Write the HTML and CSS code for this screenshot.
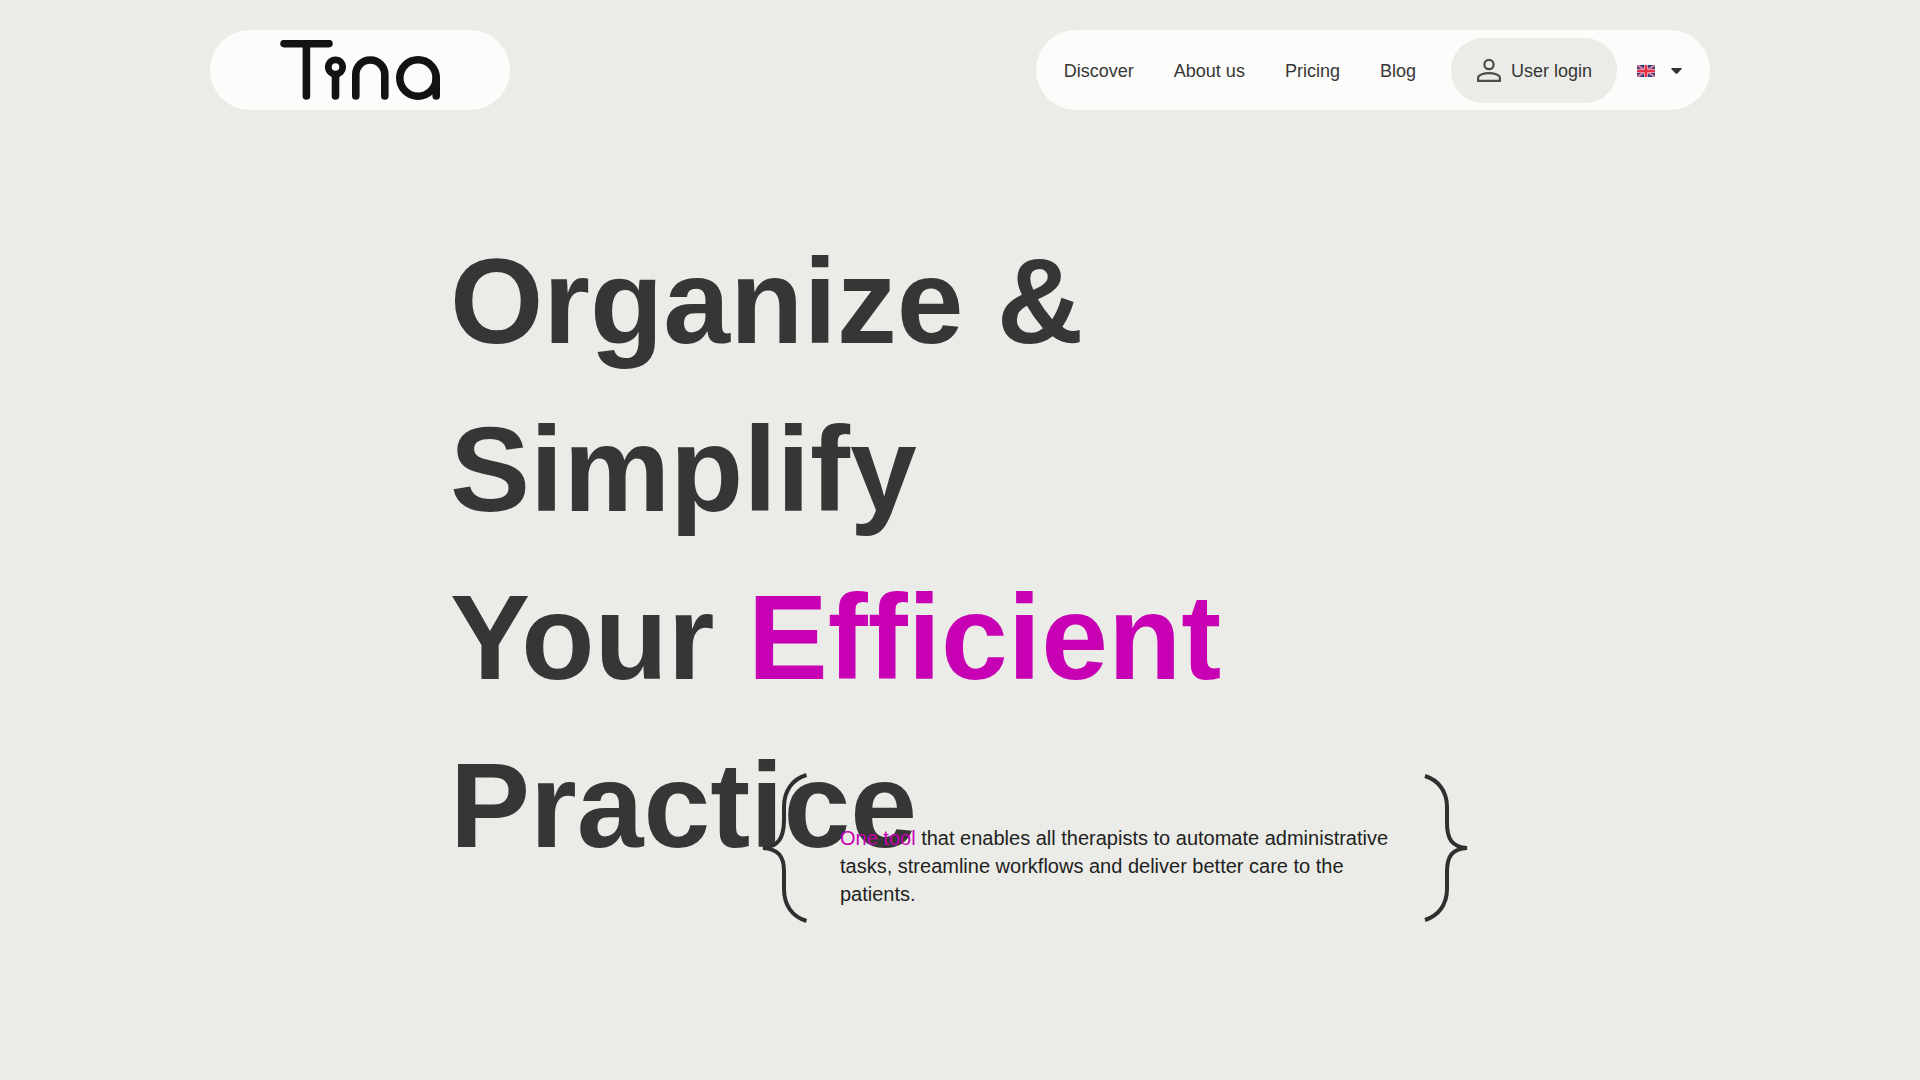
FILE: index.html
```
<!DOCTYPE html>
<html lang="en">
<head>
    <meta charset="UTF-8">
    <meta name="viewport" content="width=device-width, initial-scale=1.0">
    <title>Tina</title>
    <link rel="stylesheet" href="styles.css">
</head>
<body>
    <header class="header">
        <a class="logo" href="#" aria-label="Tina">
            <svg width="160" height="60" viewBox="10 10 160 60" fill="none" stroke="#131313" stroke-width="7.6" stroke-linecap="round">
                <path d="M14 13.6H59M36.4 14V66"/>
                <circle cx="65.5" cy="37" r="7.2" stroke-width="6.8"/>
                <path d="M65.5 45V66"/>
                <path d="M85.8 66V44.5a14.4 14.4 0 0 1 29 0V66"/>
                <circle cx="148" cy="48" r="18.2"/>
                <path d="M166.2 48V66"/>
            </svg>
        </a>

        <nav class="nav">
            <a class="nav-link" href="#">Discover</a>
            <a class="nav-link" href="#">About us</a>
            <a class="nav-link" href="#">Pricing</a>
            <a class="nav-link" href="#">Blog</a>
            <a class="login" href="#">
                <svg width="24" height="24" viewBox="0 0 24 24" fill="none" stroke="#4b4b4b" stroke-width="2.2">
                    <circle cx="12" cy="5.6" r="4.6"/>
                    <path d="M1.1 21.9V18.8C1.1 15.6 7.6 14.1 12 14.1s10.9 1.5 10.9 4.7v3.1z"/>
                </svg>
                User login
            </a>
            <button class="lang" type="button" aria-label="Language: English" aria-haspopup="true">
                <svg width="18" height="12" viewBox="0 0 18 12">
                    <rect width="18" height="12" fill="#293c7e"/>
                    <path d="M0 0L18 12M18 0L0 12" stroke="#d9a3b8" stroke-width="2.2"/>
                    <path d="M0 0L18 12M18 0L0 12" stroke="#d45a76" stroke-width="1"/>
                    <path d="M9 0V12M0 6H18" stroke="#e9b4c2" stroke-width="4"/>
                    <path d="M9 0V12M0 6H18" stroke="#e8304c" stroke-width="2.4"/>
                </svg>
                <svg width="11" height="6" viewBox="0 0 11 6">
                    <path d="M1 0H10Q11.3 .3 10.4 1.3L6.6 5.3Q5.5 6.4 4.4 5.3L.6 1.3Q-.3 .3 1 0z" fill="#333"/>
                </svg>
            </button>
        </nav>
    </header>

    <main class="hero">
        <h1>Organize &amp; Simplify<br>Your <span class="accent">Efficient</span> Practice</h1>
        <div class="intro">
            <svg class="brace" width="44" height="150" viewBox="0 0 44 150">
                <path d="M43.5 2C30 6 21 17 21 34V47C21 65 15 74 0 75C15 76 21 83 21 98V116C21 133 30 144 43.5 148"/>
            </svg>
            <p><span class="accent">One tool</span> that enables all therapists to automate administrative tasks, streamline workflows and deliver better care to the patients.</p>
            <svg class="brace" width="44" height="150" viewBox="0 0 44 150">
                <path d="M-1 3C12 7 21 18 21 34V50C21 66 26 74 41 75C26 76 21 83 21 99V116C21 132 12 143 -1 147"/>
            </svg>
        </div>
    </main>
</body>
</html>
```
FILE: styles.css
```
* { box-sizing: border-box; }
body { margin: 0; background-color: #ebece7; color: #222; font-family: Arial, "Liberation Sans", sans-serif; font-size: 20px; line-height: 1.4; }
a { color: inherit; text-decoration: none; }
svg { display: block; flex-shrink: 0; }
.header { display: flex; justify-content: space-between; max-width: 1500px; margin: 0 auto; padding-top: 30px; }
.logo { display: flex; justify-content: center; align-items: center; width: 300px; height: 80px; background-color: #fcfcfa; border-radius: 40px; }
.nav { display: flex; align-items: center; height: 80px; padding: 0 28px; background-color: #fcfcfa; border-radius: 40px; color: #363636; font-size: 18px; line-height: 26px; }
.nav-link { margin-right: 40px; padding-top: 2px; }
.nav-link:hover, .login:hover { color: #c800b4; }
.login { display: flex; align-items: center; gap: 10px; height: 65px; margin-left: -5px; padding: 1px 25px 0 26px; background-color: #ebece7; border-radius: 32px; }
.lang { display: flex; align-items: center; gap: 16px; margin-left: 20px; padding: 2px 0 0; border: none; background: none; cursor: pointer; }
.hero { max-width: 1020px; margin: 0 auto; padding-top: 107px; }
h1 { margin: 0; color: #363636; font-size: 120px; font-weight: bold; }
.accent { color: #c800b4; }
/* the intro sits over the last line of the title */
.intro { position: relative; display: flex; justify-content: flex-end; margin-top: -116px; }
.intro p { width: 556px; margin: 51px 30px 0 33px; }
.brace { fill: none; stroke: #2f2f2f; stroke-width: 4; overflow: visible; }
```
